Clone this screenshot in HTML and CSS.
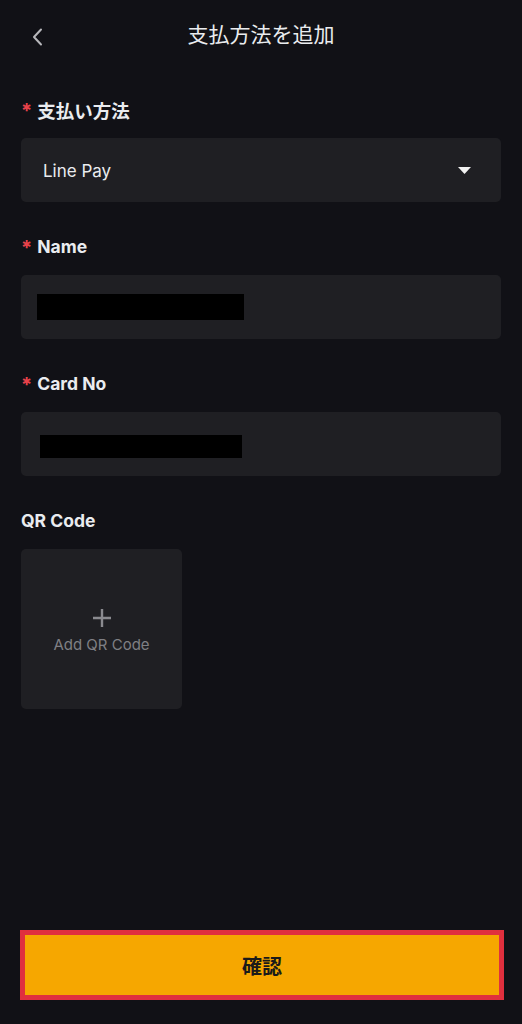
FILE: index.html
```html
<!DOCTYPE html>
<html lang="ja">
<head>
<meta charset="utf-8">
<link rel="stylesheet" href="styles.css">
</head>
<body>
<div class="page">
  <header class="header">
    <svg class="back" width="12" height="18" viewBox="0 0 12 18"><polyline points="9,1.5 2,9 9,16.5" fill="none" stroke="#b7b7bb" stroke-width="2" stroke-linecap="round" stroke-linejoin="round"/></svg>
    <h1 class="title">支払方法を追加</h1>
  </header>
  <main class="form">
    <section class="group">
      <div class="label"><span class="req">*</span><span class="cjk">支払い方法</span></div>
      <div class="field select">
        <span class="value">Line Pay</span>
        <svg class="caret" width="13" height="8" viewBox="0 0 13 8"><polygon points="0,0 13,0 6.5,7" fill="#f2f2f2"/></svg>
      </div>
    </section>
    <section class="group">
      <div class="label"><span class="req">*</span>Name</div>
      <div class="field"><span class="redact redact-name"></span></div>
    </section>
    <section class="group">
      <div class="label"><span class="req">*</span>Card No</div>
      <div class="field"><span class="redact redact-card"></span></div>
    </section>
    <section class="group">
      <div class="label">QR Code</div>
      <div class="upload">
        <svg class="plus" width="20" height="20" viewBox="0 0 20 20"><path d="M10 1v18M1 10h18" stroke="#8a8a8f" stroke-width="2.4" fill="none"/></svg>
        <span class="upload-text">Add QR Code</span>
      </div>
    </section>
  </main>
  <div class="footer">
    <button class="confirm">確認</button>
  </div>
</div>
</body>
</html>
```
FILE: styles.css
```css
* { box-sizing: border-box; }
html, body {
  margin: 0;
  padding: 0;
  background: #111116;
}
body {
  font-family: "Inter", "Noto Sans CJK JP", sans-serif;
  color: #eaecef;
}
.page {
  height: 1024px;
  display: flex;
  flex-direction: column;
  padding: 0 21px 24px 21px;
}
.header {
  height: 74px;
  position: relative;
  display: flex;
  align-items: center;
  justify-content: center;
}
.back {
  position: absolute;
  left: 11px;
  top: 28px;
}
.title {
  margin: 0 0 8px 0;
  font-family: "Noto Sans CJK JP", sans-serif;
  font-size: 21px;
  line-height: 30px;
  font-weight: 400;
  color: #eaecef;
}
.form {
  padding-top: 24px;
  display: flex;
  flex-direction: column;
  gap: 33px;
}
.group {
  display: flex;
  flex-direction: column;
  gap: 16px;
}
.label {
  height: 24px;
  line-height: 24px;
  font-size: 17.5px;
  font-weight: 700;
  color: #eaecef;
  display: flex;
  align-items: center;
}
.cjk {
  font-family: "Noto Sans CJK JP", sans-serif;
  font-size: 18.5px;
}
.req {
  color: #e8424a;
  font-size: 20px;
  margin: 0 5px 0 0;
  position: relative;
  top: 1px;
}
.field {
  height: 64px;
  background: #1f1f23;
  border-radius: 5px;
  display: flex;
  align-items: center;
  padding: 0 16px;
}
.select {
  padding: 0 30px 0 22px;
  justify-content: space-between;
}
.value {
  font-size: 17px;
  color: #eaecef;
  margin-top: 2px;
}
.caret { margin-top: 2px; }
.redact {
  display: block;
  background: #000;
}
.redact-name {
  width: 207px;
  height: 26px;
}
.redact-card {
  width: 202px;
  height: 23px;
  margin-left: 3px;
  margin-top: 4px;
}
.upload {
  width: 161px;
  height: 160px;
  background: #1f1f23;
  border-radius: 5px;
  display: flex;
  flex-direction: column;
  align-items: center;
  justify-content: center;
  padding-top: 4px;
}
.plus {
  display: block;
}
.upload-text {
  font-size: 15px;
  line-height: 20px;
  color: #7f7f84;
  margin-top: 7px;
}
.footer {
  margin-top: auto;
}
.confirm {
  display: block;
  width: 484px;
  margin-left: -1px;
  height: 70px;
  border: 5px solid #e0303e;
  background: #f6a700;
  color: #1a1a1a;
  font-family: "Noto Sans CJK JP", sans-serif;
  font-size: 20px;
  font-weight: 700;
  padding: 0;
}
```
